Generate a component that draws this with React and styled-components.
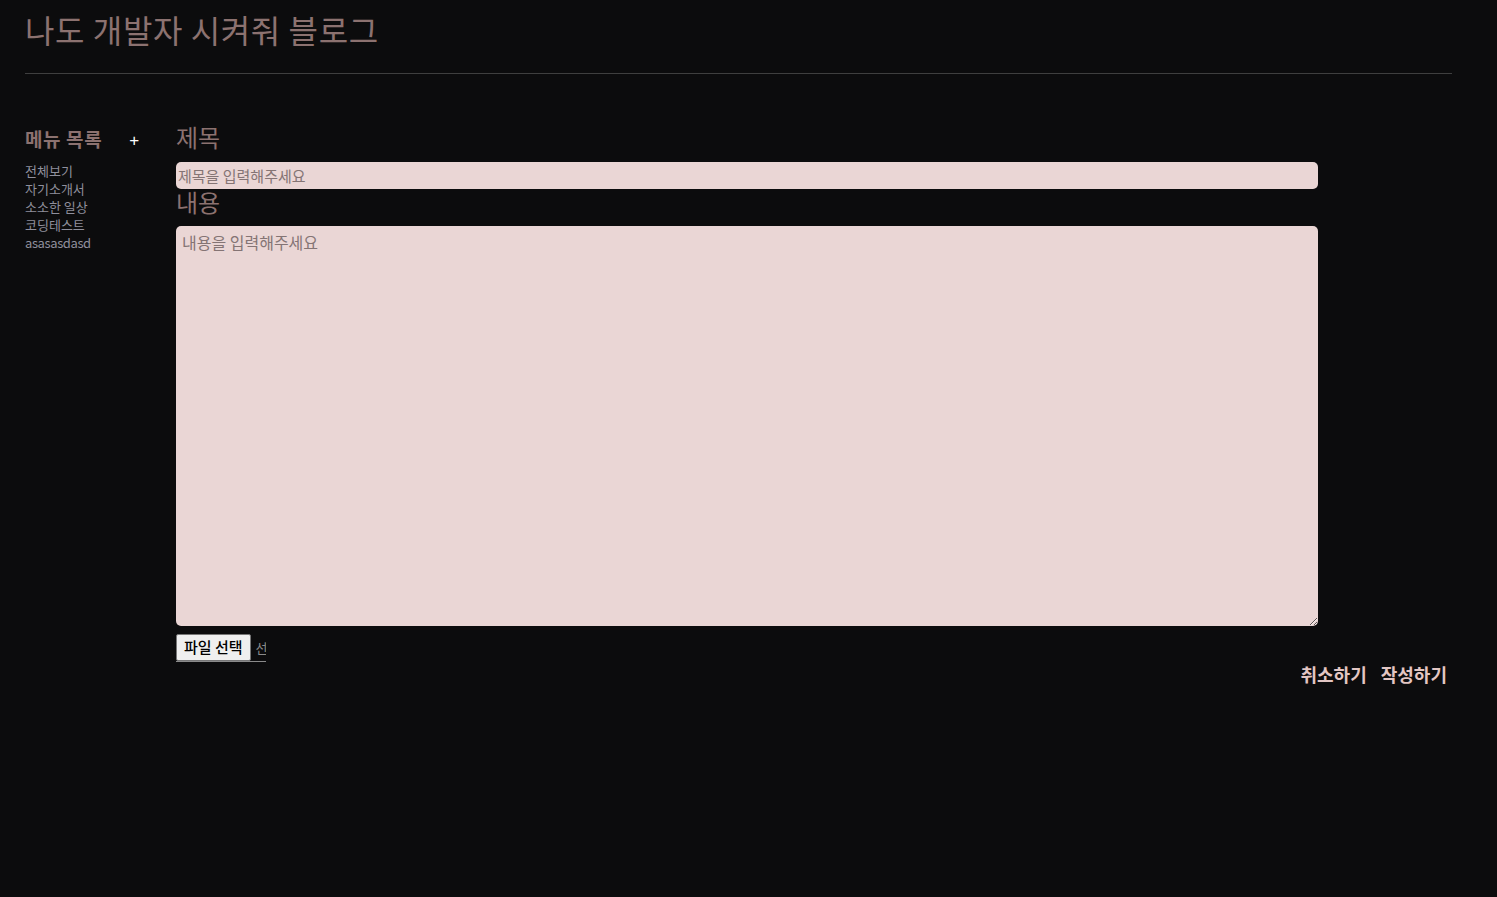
import React from 'react';
import styled, { createGlobalStyle } from 'styled-components';

const GlobalStyle = createGlobalStyle`
  html, body {
    margin: 0;
    padding: 0;
    background: #0c0c0d;
    font-family: "Noto Sans CJK KR", "Noto Sans", sans-serif;
  }
`;

const Page = styled.div`
  min-height: 897px;
  padding: 0 45px 0 25px;
  background: #0c0c0d;
`;

const Header = styled.header`
  padding-top: 7px;
  height: 66px;
  border-bottom: 1px solid #3f3f3f;
`;

const BlogTitle = styled.h1`
  margin: 0;
  font-size: 32px;
  font-weight: 400;
  line-height: 44px;
  color: #8c7270;
  letter-spacing: 0.6px;
`;

const Body = styled.div`
  display: flex;
  margin-top: 50px;
`;

const Sidebar = styled.aside`
  width: 151px;
  flex-shrink: 0;
`;

const MenuHead = styled.div`
  display: flex;
  align-items: center;
  height: 28px;
`;

const MenuTitle = styled.h2`
  margin: 0;
  font-size: 19px;
  font-weight: 700;
  letter-spacing: 0.6px;
  color: #8c7270;
`;

const AddButton = styled.button`
  margin-left: 27px;
  margin-top: 5px;
  padding: 0;
  border: none;
  background: none;
  color: #ffffff;
  font-size: 17px;
  line-height: 1;
  cursor: pointer;
`;

const MenuList = styled.ul`
  list-style: none;
  margin: 10px 0 0;
  padding: 0;
`;

const MenuItem = styled.li`
  font-size: 13px;
  line-height: 18px;
  color: #8f8f9c;
  letter-spacing: ${(props) => (props.latin ? '-0.4px' : '0')};
  cursor: pointer;
`;

const Main = styled.main`
  flex: 1;
  display: flex;
  flex-direction: column;
`;

const Label = styled.h3`
  margin: 0;
  font-size: 24px;
  font-weight: 400;
  line-height: 26px;
  color: #8c7270;
`;

const TitleInput = styled.input`
  box-sizing: border-box;
  width: 1142px;
  height: 27px;
  margin-top: 12px;
  padding: 0 2px;
  border: none;
  border-radius: 5px;
  background: #ead6d5;
  font-family: inherit;
  font-size: 15px;
  color: #333;
  outline: none;

  &::placeholder {
    color: #847474;
  }
`;

const ContentArea = styled.textarea`
  box-sizing: border-box;
  width: 1142px;
  height: 400px;
  margin-top: 11px;
  padding: 4px 6px;
  border: none;
  border-radius: 5px;
  background: #ead6d5;
  font-family: inherit;
  font-size: 16px;
  color: #333;
  outline: none;

  &::placeholder {
    color: #847474;
  }
`;

const FileField = styled.label`
  display: flex;
  align-items: center;
  width: 90px;
  height: 28px;
  margin-top: 7px;
  overflow: hidden;
  border-bottom: 1px solid #8a8a8a;
  cursor: pointer;

  input {
    display: none;
  }
`;

const FileButton = styled.span`
  flex-shrink: 0;
  box-sizing: border-box;
  height: 27px;
  padding: 0 7px;
  border: 1px solid #767676;
  border-radius: 2px;
  background: #efefef;
  color: #000;
  font-size: 15px;
  font-weight: 500;
  line-height: 24px;
  white-space: nowrap;
`;

const FileName = styled.span`
  margin-left: 5px;
  font-size: 13px;
  color: #8a8a8a;
  white-space: nowrap;
`;

const Actions = styled.div`
  display: flex;
  justify-content: flex-end;
  gap: 14px;
  margin-top: 0;
  padding-right: 5px;
`;

const ActionButton = styled.button`
  padding: 0;
  border: none;
  background: none;
  font-family: inherit;
  font-size: 18px;
  font-weight: 700;
  line-height: 24px;
  color: #e3c6c3;
  cursor: pointer;
`;

const menus = ['전체보기', '자기소개서', '소소한 일상', '코딩테스트', 'asasasdasd'];

export default function App() {
  return (
    <Page>
      <GlobalStyle />
      <Header>
        <BlogTitle>나도 개발자 시켜줘 블로그</BlogTitle>
      </Header>
      <Body>
        <Sidebar>
          <MenuHead>
            <MenuTitle>메뉴 목록</MenuTitle>
            <AddButton>+</AddButton>
          </MenuHead>
          <MenuList>
            {menus.map((m) => (
              <MenuItem key={m} latin={/^[a-z]+$/.test(m)}>
                {m}
              </MenuItem>
            ))}
          </MenuList>
        </Sidebar>
        <Main>
          <Label>제목</Label>
          <TitleInput placeholder="제목을 입력해주세요" />
          <Label>내용</Label>
          <ContentArea placeholder="내용을 입력해주세요" />
          <FileField>
            <input type="file" />
            <FileButton>파일 선택</FileButton>
            <FileName>선택된 파일 없음</FileName>
          </FileField>
          <Actions>
            <ActionButton>취소하기</ActionButton>
            <ActionButton>작성하기</ActionButton>
          </Actions>
        </Main>
      </Body>
    </Page>
  );
}
